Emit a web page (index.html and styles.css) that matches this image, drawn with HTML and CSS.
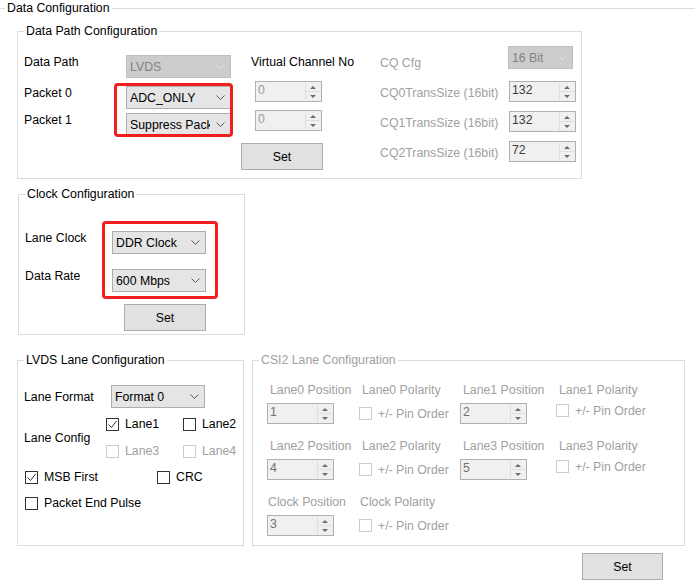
FILE: index.html
```html
<!DOCTYPE html>
<html lang="en">
<head>
    <meta charset="UTF-8">
    <meta name="viewport" content="width=device-width, initial-scale=1.0">
    <title>Data Configuration</title>
    <link rel="stylesheet" href="styles.css">
</head>
<body>
    <fieldset class="group outer">
        <legend>Data Configuration</legend>

        <fieldset class="group data-path">
            <legend>Data Path Configuration</legend>
            <div class="dp-body">
                <div class="dp-grid">
                    <span class="lbl">Data Path</span>
                    <div class="combo disabled"><span class="txt">LVDS</span><span class="arr"><svg width="9" height="5" viewBox="0 0 9 5"><path d="M0.5 0.5 L4.5 4.5 L8.5 0.5"/></svg></span></div>
                    <span class="lbl">Packet 0</span>
                    <div class="combo"><span class="txt">ADC_ONLY</span><span class="arr"><svg width="9" height="5" viewBox="0 0 9 5"><path d="M0.5 0.5 L4.5 4.5 L8.5 0.5"/></svg></span></div>
                    <span class="lbl">Packet 1</span>
                    <div class="combo"><span class="txt">Suppress Packet</span><span class="arr"><svg width="9" height="5" viewBox="0 0 9 5"><path d="M0.5 0.5 L4.5 4.5 L8.5 0.5"/></svg></span></div>
                    <span class="mark mark-packets"></span>
                </div>

                <div class="dp-vc">
                    <span class="lbl vc-label">Virtual Channel No</span>
                    <div class="spin dim"><span class="val">0</span><span class="btns"><i class="up"></i><i class="down"></i></span></div>
                    <div class="spin dim"><span class="val">0</span><span class="btns"><i class="up"></i><i class="down"></i></span></div>
                    <div class="btn">Set</div>
                </div>

                <div class="dp-cq">
                    <span class="lbl">CQ Cfg</span>
                    <span class="lbl">CQ0TransSize (16bit)</span>
                    <span class="lbl">CQ1TransSize (16bit)</span>
                    <span class="lbl">CQ2TransSize (16bit)</span>
                </div>

                <div class="dp-cqv">
                    <div class="combo disabled"><span class="txt">16 Bit</span><span class="arr"><svg width="9" height="5" viewBox="0 0 9 5"><path d="M0.5 0.5 L4.5 4.5 L8.5 0.5"/></svg></span></div>
                    <div class="spin"><span class="val">132</span><span class="btns"><i class="up"></i><i class="down"></i></span></div>
                    <div class="spin"><span class="val">132</span><span class="btns"><i class="up"></i><i class="down"></i></span></div>
                    <div class="spin"><span class="val">72</span><span class="btns"><i class="up"></i><i class="down"></i></span></div>
                </div>
            </div>
        </fieldset>

        <fieldset class="group clock">
            <legend>Clock Configuration</legend>
            <div class="clock-body">
                <span class="lbl">Lane Clock</span>
                <div class="combo"><span class="txt">DDR Clock</span><span class="arr"><svg width="9" height="5" viewBox="0 0 9 5"><path d="M0.5 0.5 L4.5 4.5 L8.5 0.5"/></svg></span></div>
                <span class="lbl">Data Rate</span>
                <div class="combo"><span class="txt">600 Mbps</span><span class="arr"><svg width="9" height="5" viewBox="0 0 9 5"><path d="M0.5 0.5 L4.5 4.5 L8.5 0.5"/></svg></span></div>
                <div class="btn">Set</div>
                <span class="mark mark-clock"></span>
            </div>
        </fieldset>

        <div class="lower">
            <fieldset class="group lvds">
                <legend>LVDS Lane Configuration</legend>
                <div class="lvds-body">
                    <div class="lane-format">
                        <span class="lbl">Lane Format</span>
                        <div class="combo"><span class="txt">Format 0</span><span class="arr"><svg width="9" height="5" viewBox="0 0 9 5"><path d="M0.5 0.5 L4.5 4.5 L8.5 0.5"/></svg></span></div>
                    </div>
                    <div class="lane-config">
                        <span class="lbl">Lane Config</span>
                        <div class="lane-checks">
                            <label class="check"><span class="cb"><svg width="11" height="11" viewBox="0 0 11 11"><path d="M1.5 5.5 L4.5 8.5 L9.5 2"/></svg></span>Lane1</label>
                            <label class="check"><span class="cb"></span>Lane2</label>
                            <label class="check off"><span class="cb"></span>Lane3</label>
                            <label class="check off"><span class="cb"></span>Lane4</label>
                        </div>
                    </div>
                    <div class="flag-row">
                        <label class="check msb"><span class="cb"><svg width="11" height="11" viewBox="0 0 11 11"><path d="M1.5 5.5 L4.5 8.5 L9.5 2"/></svg></span>MSB First</label>
                        <label class="check"><span class="cb"></span>CRC</label>
                    </div>
                    <div class="flag-row pulse">
                        <label class="check"><span class="cb"></span>Packet End Pulse</label>
                    </div>
                </div>
            </fieldset>

            <fieldset class="group csi2">
                <legend>CSI2 Lane Configuration</legend>
                <div class="csi-body">
                    <div class="cell">
                        <span class="lbl">Lane0 Position</span>
                        <div class="spin"><span class="val">1</span><span class="btns"><i class="up"></i><i class="down"></i></span></div>
                    </div>
                    <div class="cell">
                        <span class="lbl">Lane0 Polarity</span>
                        <label class="check off"><span class="cb"></span>+/- Pin Order</label>
                    </div>
                    <div class="cell">
                        <span class="lbl">Lane1 Position</span>
                        <div class="spin"><span class="val">2</span><span class="btns"><i class="up"></i><i class="down"></i></span></div>
                    </div>
                    <div class="cell raised">
                        <span class="lbl">Lane1 Polarity</span>
                        <label class="check off"><span class="cb"></span>+/- Pin Order</label>
                    </div>

                    <div class="cell">
                        <span class="lbl">Lane2 Position</span>
                        <div class="spin"><span class="val">4</span><span class="btns"><i class="up"></i><i class="down"></i></span></div>
                    </div>
                    <div class="cell">
                        <span class="lbl">Lane2 Polarity</span>
                        <label class="check off"><span class="cb"></span>+/- Pin Order</label>
                    </div>
                    <div class="cell">
                        <span class="lbl">Lane3 Position</span>
                        <div class="spin"><span class="val">5</span><span class="btns"><i class="up"></i><i class="down"></i></span></div>
                    </div>
                    <div class="cell raised">
                        <span class="lbl">Lane3 Polarity</span>
                        <label class="check off"><span class="cb"></span>+/- Pin Order</label>
                    </div>

                    <div class="cell">
                        <span class="lbl tight">Clock Position</span>
                        <div class="spin"><span class="val">3</span><span class="btns"><i class="up"></i><i class="down"></i></span></div>
                    </div>
                    <div class="cell">
                        <span class="lbl tight">Clock Polarity</span>
                        <label class="check off"><span class="cb"></span>+/- Pin Order</label>
                    </div>
                </div>
            </fieldset>
        </div>

        <div class="footer">
            <div class="btn">Set</div>
        </div>
    </fieldset>
</body>
</html>
```

FILE: styles.css
```css
* {
    box-sizing: border-box;
}

body {
    margin: 0;
    padding-top: 1px;
    background: #fff;
    color: #000;
    font-family: "Liberation Sans", Arial, sans-serif;
    font-size: 12.3px;
    line-height: 14px;
    overflow: hidden;
}

/* group boxes */
.group {
    margin: 0;
    padding: 0;
    min-width: 0;
    border: 1px solid #dcdcdc;
}

.group > legend {
    margin-left: 6px;
    padding: 0 2px;
    height: 15px;
    line-height: 15px;
}

.outer {
    border-width: 1px 0 0 0;
}

.outer > legend {
    margin-left: 5px;
}

.lbl {
    display: block;
    white-space: nowrap;
}

/* combo box */
.combo {
    display: flex;
    align-items: center;
    height: 23px;
    border: 1px solid #adadad;
    background: #e5e5e5;
    padding-left: 3px;
    white-space: nowrap;
    overflow: hidden;
}

.combo .txt {
    flex: 1;
    overflow: hidden;
}

.combo .arr {
    flex: none;
    width: 20px;
    display: flex;
    align-items: center;
    justify-content: center;
}

.combo .arr svg {
    display: block;
}

.combo .arr path {
    fill: none;
    stroke: #5a5a5a;
    stroke-width: 1;
}

.combo.disabled {
    background: #cccccc;
    border-color: #bfbfbf;
    color: #838383;
}

.combo.disabled .arr path {
    stroke: #e2e2e2;
}

/* numeric up/down */
.spin {
    display: flex;
    width: 67px;
    height: 21px;
    border: 1px solid #b0b0b0;
    background: #f0f0f0;
    color: #3c3c3c;
}

.spin.dim {
    color: #9a9a9a;
}

.spin .val {
    flex: 1;
    padding: 1px 2px;
}

.spin .btns {
    width: 15px;
    margin: 1px 1px 1px 0;
    display: flex;
    flex-direction: column;
    border-left: 1px solid #dedede;
}

.spin .btns i {
    flex: 1;
    display: flex;
    align-items: center;
    justify-content: center;
}

.spin .btns i + i {
    border-top: 1px solid #dedede;
}

.spin .btns i::before {
    content: '';
    border-left: 3px solid transparent;
    border-right: 3px solid transparent;
}

.spin .btns .up::before {
    border-bottom: 3px solid #6d6d6d;
}

.spin .btns .down::before {
    border-top: 3px solid #6d6d6d;
}

/* button */
.btn {
    width: 82px;
    height: 27px;
    border: 1px solid #adadad;
    background: #e1e1e1;
    display: flex;
    align-items: center;
    justify-content: center;
}

/* check box */
.check {
    display: flex;
    align-items: center;
    gap: 6px;
    white-space: nowrap;
}

.cb {
    width: 13px;
    height: 13px;
    flex: none;
    border: 1px solid #333;
    background: #fff;
}

.cb svg {
    display: block;
}

.cb path {
    fill: none;
    stroke: #333;
    stroke-width: 1;
}

.check.off {
    color: #a0a0a0;
}

.check.off .cb {
    border-color: #cccccc;
}

/* red highlight annotations */
.mark {
    position: absolute;
    border: 3px solid #f01e1e;
    border-radius: 4px;
    pointer-events: none;
}

/* data path */
.data-path {
    width: 565px;
    margin: 8px 0 0 17px;
}

.dp-body {
    display: flex;
    align-items: flex-start;
    padding: 0 0 8px 6px;
}

.dp-grid {
    position: relative;
    display: grid;
    grid-template-columns: 102px 105px;
    grid-template-rows: 31px 27px 23px;
    align-items: start;
    padding-top: 16px;
}

.mark-packets {
    left: 90px;
    top: 44px;
    width: 119px;
    height: 54px;
}

.dp-vc {
    width: 82px;
    margin-left: 10px;
    padding-top: 16px;
    display: flex;
    flex-direction: column;
    align-items: flex-start;
}

.vc-label {
    padding-left: 10px;
}

.dp-vc .spin {
    margin: 8px 0 0 14px;
}

.dp-vc .lbl + .spin {
    margin-top: 12px;
}

.dp-vc .btn {
    margin-top: 12px;
}

.dp-cq {
    width: 128px;
    margin-left: 57px;
    padding-top: 17px;
    color: #a0a0a0;
}

.dp-cq .lbl + .lbl {
    margin-top: 16px;
}

.dp-cqv {
    width: 67px;
    padding-top: 7px;
}

.dp-cqv .combo {
    width: 65px;
}

.dp-cqv .spin {
    margin: 9px 0 0 1px;
}

.dp-cqv .combo + .spin {
    margin-top: 12px;
}

/* clock */
.clock {
    width: 227px;
    margin: 8px 0 0 18px;
}

.clock-body {
    position: relative;
    display: grid;
    grid-template-columns: 87px 94px;
    grid-template-rows: 38px 35px 27px;
    align-items: start;
    padding: 29px 0 3px 6px;
}

.clock-body .btn {
    grid-column: 2;
    margin-left: 12px;
}

.mark-clock {
    left: 83px;
    top: 19px;
    width: 116px;
    height: 78px;
}

/* lower row */
.lower {
    display: flex;
    gap: 8px;
    margin: 18px 0 0 17px;
}

.lvds {
    width: 227px;
}

.csi2 {
    width: 433px;
}

.csi2 > legend {
    color: #a0a0a0;
}

.lvds-body {
    padding: 17px 0 0 6px;
}

.lane-format {
    display: flex;
    align-items: center;
}

.lane-format .lbl {
    width: 87px;
}

.lane-format .combo {
    width: 94px;
}

.lane-config {
    display: flex;
    align-items: center;
    margin-top: 9px;
}

.lane-config .lbl {
    width: 82px;
}

.lane-checks {
    display: grid;
    grid-template-columns: 77px auto;
    grid-auto-rows: 14px;
    row-gap: 13px;
}

.flag-row {
    display: flex;
    margin-top: 12px;
    padding-left: 1px;
    height: 14px;
}

.flag-row .msb {
    width: 132px;
}

.csi-body {
    display: grid;
    grid-template-columns: 92px 101px 96px auto;
    row-gap: 15px;
    padding: 15px 0 9px 14px;
    color: #a0a0a0;
}

.cell {
    display: flex;
    flex-direction: column;
    align-items: flex-start;
    gap: 6px;
}

.cell .lbl {
    margin-left: 3px;
}

.cell .lbl.tight {
    margin-left: 1px;
}

.cell .check {
    height: 21px;
}

.cell .spin {
    color: #707070;
}

.cell.raised .check {
    margin-top: -3px;
}

.footer {
    display: flex;
    justify-content: flex-end;
    width: 685px;
    padding-right: 22px;
    margin-top: 7px;
}

.footer .btn {
    width: 81px;
}
```
